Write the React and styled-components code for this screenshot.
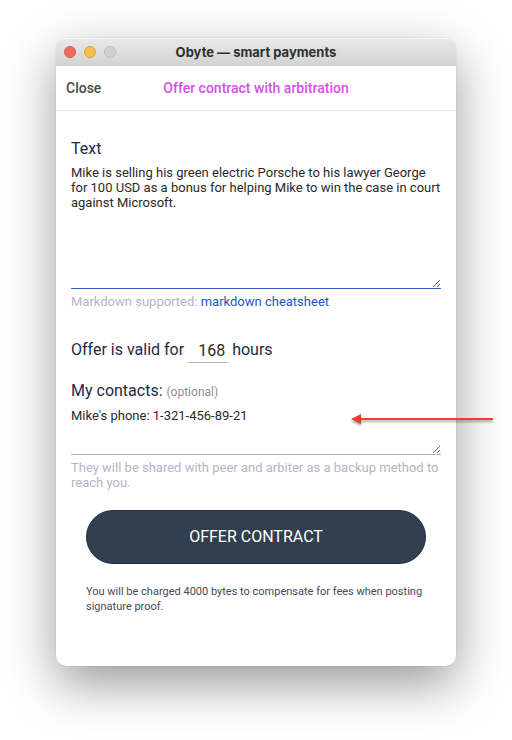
import React from "react";
import styled, { createGlobalStyle } from "styled-components";

const GlobalStyle = createGlobalStyle`
  *, *::before, *::after { box-sizing: border-box; }
  body {
    margin: 0;
    background: #fff;
    font-family: Roboto, "Liberation Sans", sans-serif;
    color: #20232a;
  }
  button, input, textarea { font-family: inherit; }
`;

const Desktop = styled.main`
  min-height: 100vh;
  padding: 38px 56px 74px;
  display: flex;
  flex-direction: column;
  overflow: hidden;
`;

const Window = styled.section`
  flex: 1;
  display: flex;
  flex-direction: column;
  border-radius: 10px;
  background: #fff;
  box-shadow: 0 0 1px rgba(0, 0, 0, 0.3), 0 18px 50px rgba(0, 0, 0, 0.4);
`;

const TitleBar = styled.header`
  height: 28px;
  padding: 0 8px;
  display: grid;
  grid-template-columns: 1fr auto 1fr;
  align-items: center;
  border-radius: 10px 10px 0 0;
  background: linear-gradient(#e9e9e9, #d3d3d3);
  box-shadow: inset 0 1px 0 #f5f5f5;
`;

const Lights = styled.div`
  display: flex;
  gap: 8px;
`;

const Light = styled.button`
  width: 12px;
  height: 12px;
  padding: 0;
  border: 1px solid ${(p) => p.$edge};
  border-radius: 50%;
  background: ${(p) => p.$fill};
`;

const WindowTitle = styled.h1`
  margin: 0;
  font: 700 13px/16px Inter, Roboto, sans-serif;
  color: #2f2f2f;
`;

const NavBar = styled.nav`
  height: 45px;
  padding: 0 10px;
  display: grid;
  grid-template-columns: 1fr auto 1fr;
  align-items: center;
  border-bottom: 1px solid #e6e6e6;
`;

const CloseButton = styled.button`
  justify-self: start;
  padding: 0;
  border: 0;
  background: none;
  font-size: 14px;
  font-weight: 500;
  line-height: 20px;
  color: #4a4a4a;
`;

const PageTitle = styled.h2`
  margin: 0;
  font-size: 14px;
  font-weight: 500;
  line-height: 20px;
  color: #d650e8;
`;

const Form = styled.form`
  padding: 28px 15px 0;
  display: flex;
  flex-direction: column;
`;

const Label = styled.label`
  font-size: 16px;
  line-height: 20px;
  color: #1d2a48;
`;

const Optional = styled.small`
  font-size: 12px;
  color: #8f8f8f;
`;

const TextArea = styled.textarea`
  display: block;
  width: 100%;
  height: ${(p) => p.$height};
  padding: 6px 0 0;
  border: 0;
  border-bottom: 1px solid ${(p) => p.$line};
  border-radius: 0;
  outline: 0;
  resize: vertical;
  overflow: hidden;
  background: transparent;
  font-size: 13px;
  line-height: 15px;
  color: #2a2a2a;
`;

const Hint = styled.p`
  margin: 5px 0 0;
  font-size: 13px;
  line-height: 15px;
  color: #b5b5c8;
`;

const HelpLink = styled.a`
  color: #2457bd;
  text-decoration: none;
`;

const ValidityRow = styled.div`
  margin: 28px 0 18px;
  display: flex;
  align-items: center;
  gap: 4px;
`;

const HoursInput = styled.input`
  width: 40px;
  height: 26px;
  padding: 2px 3px 0 0;
  border: 0;
  border-bottom: 1px solid #b5b5b5;
  border-radius: 0;
  outline: 0;
  background: none;
  font-size: 16px;
  text-align: right;
  color: #2a2a2a;
`;

const ContactsField = styled.div`
  position: relative;
`;

const ArrowMark = styled.svg`
  position: absolute;
  top: 12px;
  right: -53px;
  overflow: visible;
  pointer-events: none;
  filter: drop-shadow(0 2px 1px rgba(0, 0, 0, 0.35));
`;

const SubmitArea = styled.div`
  padding: 20px 15px 0;
`;

const SubmitButton = styled.button`
  display: block;
  width: 100%;
  height: 54px;
  border: 1px solid #1e2e48;
  border-radius: 27px;
  background: #313f4f;
  font-size: 16px;
  line-height: 20px;
  text-transform: uppercase;
  color: #fff;
`;

const FeeNote = styled.p`
  margin: 20px 0 0;
  font-size: 11px;
  line-height: 15px;
  color: #424c5a;
`;

export default function App() {
  return (
    <>
      <GlobalStyle />
      <Desktop>
        <Window>
          <TitleBar>
            <Lights>
              <Light type="button" aria-label="Close window" $fill="#ec6a5e" $edge="#d6584d" />
              <Light type="button" aria-label="Minimize window" $fill="#f4bf4f" $edge="#d9a43c" />
              <Light type="button" aria-label="Zoom window" disabled $fill="#d1d1d1" $edge="#bebebe" />
            </Lights>
            <WindowTitle>Obyte — smart payments</WindowTitle>
          </TitleBar>
          <NavBar>
            <CloseButton type="button">Close</CloseButton>
            <PageTitle>Offer contract with arbitration</PageTitle>
          </NavBar>
          <Form onSubmit={(e) => e.preventDefault()}>
            <Label htmlFor="contract-text">Text</Label>
            <TextArea
              id="contract-text"
              $height="130px"
              $line="#3b62b8"
              spellCheck={false}
              defaultValue="Mike is selling his green electric Porsche to his lawyer George for 100 USD as a bonus for helping Mike to win the case in court against Microsoft."
            />
            <Hint>
              Markdown supported: <HelpLink href="#markdown">markdown cheatsheet</HelpLink>
            </Hint>
            <ValidityRow>
              <Label htmlFor="hours">Offer is valid for</Label>
              <HoursInput id="hours" type="text" inputMode="numeric" defaultValue="168" />
              <Label htmlFor="hours">hours</Label>
            </ValidityRow>
            <Label htmlFor="contacts">
              My contacts: <Optional>(optional)</Optional>
            </Label>
            <ContactsField>
              <TextArea
                id="contacts"
                $height="53px"
                $line="#b5b5b5"
                spellCheck={false}
                defaultValue="Mike's phone: 1-321-456-89-21"
              />
              <ArrowMark width="143" height="10" viewBox="0 0 143 10" aria-hidden="true">
                <path d="M8 5H142" stroke="#ea4025" strokeWidth="2" />
                <path d="M0 5L10 0V10Z" fill="#ea4025" />
              </ArrowMark>
            </ContactsField>
            <Hint>They will be shared with peer and arbiter as a backup method to reach you.</Hint>
            <SubmitArea>
              <SubmitButton type="submit">Offer contract</SubmitButton>
              <FeeNote>
                You will be charged 4000 bytes to compensate for fees when posting signature proof.
              </FeeNote>
            </SubmitArea>
          </Form>
        </Window>
      </Desktop>
    </>
  );
}
